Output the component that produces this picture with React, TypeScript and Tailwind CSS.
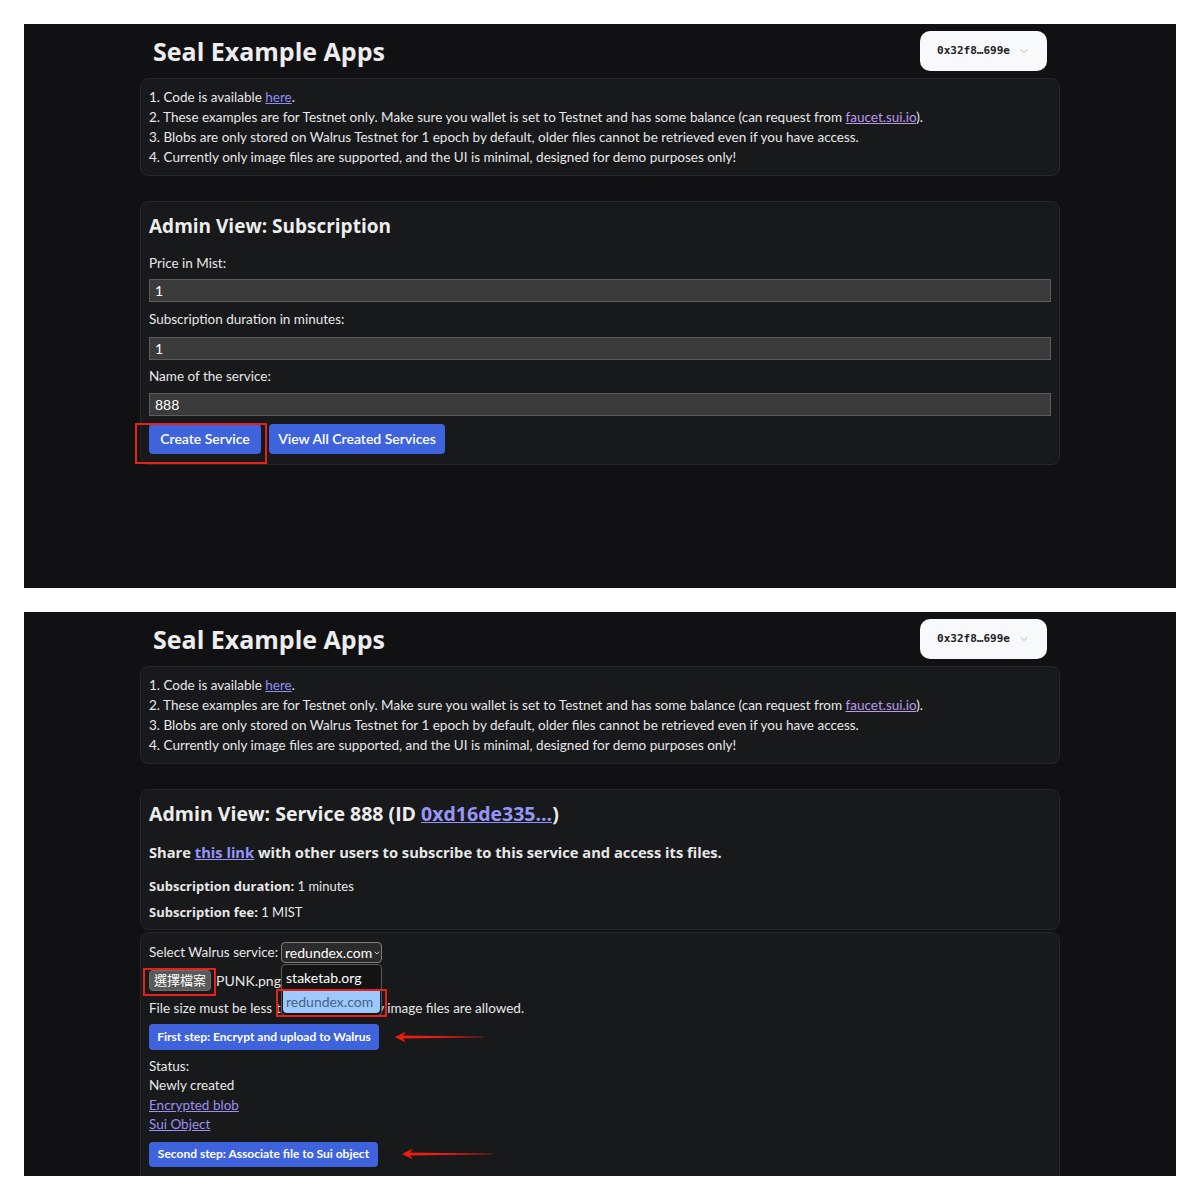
import { ChevronDown } from 'lucide-react';

const font = { fontFamily: 'Lato, "Noto Sans CJK TC", sans-serif' };
const heavy = { fontFamily: '"Open Sans", Lato, sans-serif' };

// red hand-drawn arrow used for annotations
function Arrow({ width }: { width: number }) {
  return (
    <svg width={width} height="12" viewBox={`0 0 ${width} 12`} className="block">
      <polygon points={`0,6 11,0.5 8,4.6 ${width},5.7 ${width},6.3 8,7.4 11,11.5`} fill="#ee1d14" />
    </svg>
  );
}

function Header() {
  return (
    <div className="flex items-center justify-between h-[54px] px-[13px]">
      <h1 className="text-[25px] font-bold text-[#ededed] leading-none" style={heavy}>Seal Example Apps</h1>
      <button className="flex items-center gap-2 h-10 w-[127px] justify-center rounded-[10px] bg-[#f8f9fa] text-[#1c2024]">
        <span className="text-[11px] font-bold" style={{ fontFamily: '"DejaVu Sans Mono", monospace' }}>0x32f8…699e</span>
        <ChevronDown className="w-3 h-3 text-[#b0b4ba]" />
      </button>
    </div>
  );
}

function Notes() {
  return (
    <div className="rounded-lg border border-[#26272b] bg-[#18191b] p-2 text-[13.5px] leading-5 text-[#e8e8e8]">
      <p>1. Code is available <a className="underline text-[#8f8ef7]">here</a>.</p>
      <p>
        2. These examples are for Testnet only. Make sure you wallet is set to Testnet and has some balance (can request from{' '}
        <a className="underline text-[#b99be8]">faucet.sui.io</a>).
      </p>
      <p>3. Blobs are only stored on Walrus Testnet for 1 epoch by default, older files cannot be retrieved even if you have access.</p>
      <p>4. Currently only image files are supported, and the UI is minimal, designed for demo purposes only!</p>
    </div>
  );
}

function Input({ value }: { value: string }) {
  return (
    <div className="h-[23px] w-full border border-[#5c5c5c] bg-[#3b3b3b] px-[5px] text-sm leading-[21px] text-white">
      {value}
    </div>
  );
}

function Panel({ children }: { children: React.ReactNode }) {
  return (
    <div className="h-[564px] overflow-hidden bg-[#111113]">
      <div className="w-[920px] mx-auto">{children}</div>
    </div>
  );
}

function CreateView() {
  return (
    <Panel>
      <Header />
      <Notes />
      <div className="mt-[25px] rounded-lg border border-[#26272b] bg-[#18191b] px-2 pt-2 pb-[10px] text-[13.5px] text-[#e8e8e8]">
        <h2 className="text-[19px] font-bold leading-8 text-[#ededed]" style={heavy}>Admin View: Subscription</h2>
        <p className="mt-[11px] leading-5">Price in Mist:</p>
        <div className="mt-[6px]"><Input value="1" /></div>
        <p className="mt-[7px] leading-5">Subscription duration in minutes:</p>
        <div className="mt-[8px]"><Input value="1" /></div>
        <p className="mt-[6px] leading-5">Name of the service:</p>
        <div className="mt-[7px]"><Input value="888" /></div>
        <div className="mt-[8px] flex gap-2">
          <div className="relative">
            <button className="h-[30px] w-[112px] rounded bg-[#3e63dd] text-sm font-semibold text-white">Create Service</button>
            <div className="absolute left-[-14px] top-[-1px] w-[132px] h-[41px] border-2 border-[#e8201a]" />
          </div>
          <button className="h-[30px] w-[176px] rounded bg-[#3e63dd] text-sm font-semibold text-white">View All Created Services</button>
        </div>
      </div>
    </Panel>
  );
}

function ServiceView() {
  return (
    <Panel>
      <Header />
      <Notes />
      <div className="mt-[25px] rounded-lg border border-[#26272b] bg-[#18191b] px-2 pt-2 pb-[7px] text-[13.5px] text-[#e8e8e8]">
        <h2 className="text-[19.5px] font-bold leading-8 text-[#ededed]" style={heavy}>
          Admin View: Service 888 (ID <a className="underline text-[#9796f8]">0xd16de335...</a>)
        </h2>
        <p className="mt-3 text-[14.7px] font-bold leading-5" style={heavy}>
          Share <a className="underline text-[#9796f8]">this link</a> with other users to subscribe to this service and access its files.
        </p>
        <p className="mt-[14px] text-[13px] leading-5"><span className="font-bold" style={heavy}>Subscription duration:</span> 1 minutes</p>
        <p className="mt-[6px] text-[13px] leading-5"><span className="font-bold" style={heavy}>Subscription fee:</span> 1 MIST</p>
      </div>

      <div className="mt-[2px] rounded-lg border border-[#26272b] bg-[#18191b] px-2 pt-[9px] pb-6 text-[13.5px] text-[#e8e8e8]">
        <div className="flex items-center h-[21px]">
          <span>Select Walrus service:</span>
          <div className="relative ml-[3px]">
            <div className="flex items-center h-[21px] w-[101px] border border-[#7b7b7b] rounded-sm bg-[#2b2b2b] pl-[3px] text-sm text-white">
              <span>redundex.com</span>
              <ChevronDown className="ml-[1px] w-3 h-3" strokeWidth={2.5} />
            </div>
            <div className="absolute z-10 left-0 top-[22px] w-[101px] h-[52px] border border-[#5a5a5a] rounded-sm bg-[#141414] px-[1px] text-sm">
              <div className="h-[26px] pl-[3px] leading-[26px] text-white">staketab.org</div>
              <div className="h-[22px] pl-[3px] leading-[22px] rounded-b bg-[#9ccaff] text-[#4a5f80]">redundex.com</div>
            </div>
            <div className="absolute z-20 left-[-5px] top-[47px] w-[111px] h-[28px] border-2 border-[#e8201a]" />
          </div>
        </div>
        <div className="mt-[7px] flex items-center h-[21px]">
          <div className="relative">
            <button className="h-[21px] w-[62px] rounded-sm border border-[#6e6e6e] bg-[#5a5a5a] text-[13px] text-white">選擇檔案</button>
            <div className="absolute left-[-6px] top-[-2px] w-[73px] h-[28px] border-2 border-[#e8201a]" />
          </div>
          <span className="ml-[5px] text-sm">PUNK.png</span>
        </div>
        <p className="mt-[7px] leading-5">File size must be less than 10 MiB. Only image files are allowed.</p>
        <div className="mt-[6px] flex items-center">
          <button className="h-[26px] w-[230px] rounded bg-[#3e63dd] text-xs font-bold text-white">First step: Encrypt and upload to Walrus</button>
          <div className="ml-4"><Arrow width={88} /></div>
        </div>
        <p className="mt-[6px] leading-5">Status:</p>
        <p className="leading-[19.5px]">Newly created</p>
        <p className="leading-[19.5px]"><a className="underline text-[#9c8ff0]">Encrypted blob</a></p>
        <p className="leading-[19.5px]"><a className="underline text-[#9c8ff0]">Sui Object</a></p>
        <div className="mt-[7px] flex items-center">
          <button className="h-[25px] w-[229px] rounded bg-[#3e63dd] text-xs font-bold text-white">Second step: Associate file to Sui object</button>
          <div className="ml-6"><Arrow width={90} /></div>
        </div>
      </div>
    </Panel>
  );
}

export default function App() {
  return (
    <div className="min-h-screen bg-white px-6 py-6 flex flex-col gap-6" style={font}>
      <CreateView />
      <ServiceView />
    </div>
  );
}
